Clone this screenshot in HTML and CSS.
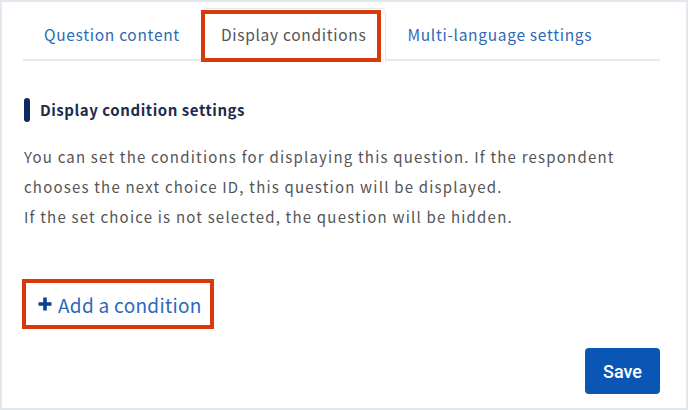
FILE: index.html
```html
<!DOCTYPE html>
<html lang="en">
<head>
    <meta charset="UTF-8">
    <meta name="viewport" content="width=device-width, initial-scale=1.0">
    <title>Display conditions</title>
    <link rel="stylesheet" href="styles.css">
</head>
<body>
    <div class="panel">
        <ul class="tabs">
            <li class="tab">Question content</li>
            <li class="tab active">Display conditions</li>
            <li class="tab">Multi-language settings</li>
        </ul>

        <div class="content">
            <h2 class="section-title">Display condition settings</h2>
            <p class="description">
                You can set the conditions for displaying this question. If the respondent<br>
                chooses the next choice ID, this question will be displayed.<br>
                If the set choice is not selected, the question will be hidden.
            </p>

            <div class="add-wrap">
                <a class="add-link" href="#">
                    <svg class="plus" width="14" height="14" viewBox="0 0 14 14">
                        <path d="M7 0.5v13M0.5 7h13" stroke="#0b3f8f" stroke-width="3.6" fill="none"/>
                    </svg>
                    Add a condition
                </a>
            </div>
        </div>

        <div class="actions">
            <button class="save-btn">Save</button>
        </div>
    </div>
</body>
</html>
```

FILE: styles.css
```css
body {
    margin: 0;
    padding: 0;
    background: #ffffff;
    font-family: "Noto Sans CJK JP", "Noto Sans", sans-serif;
}
.panel {
    box-sizing: border-box;
    width: 688px;
    height: 410px;
    border: 2px solid #e3e7ee;
    display: flex;
    flex-direction: column;
}
.tabs {
    list-style: none;
    margin: 6px 26px 0 21px;
    padding: 0;
    display: flex;
    border-bottom: 2px solid #e6e9ee;
}
.tab {
    position: relative;
    height: 51px;
    box-sizing: border-box;
    padding: 0 21px 0 20px;
    display: flex;
    align-items: center;
    font-size: 15.5px;
    letter-spacing: 0.7px;
    color: #2e6ab3;
    border: 1px solid transparent;
    border-bottom: none;
    margin-bottom: -2px;
}
.tab.active {
    color: #555555;
    background: #ffffff;
    border-color: #e3e7ee;
    border-radius: 5px 5px 0 0;
    padding: 0 19px 2px 18px;
    height: 53px;
}
/* red highlight around the active tab */
.tab.active::after {
    content: "";
    position: absolute;
    left: -2px;
    top: 1px;
    right: 4px;
    height: 52px;
    box-sizing: border-box;
    border: 4px solid #d83a0c;
}
.content {
    padding: 0 24px 0 22px;
    flex: 1;
}
.section-title {
    margin: 37px 0 0 0;
    padding-left: 16px;
    position: relative;
    font-size: 15px;
    letter-spacing: 0.55px;
    font-weight: bold;
    color: #1d2b4c;
    line-height: 24px;
}
.section-title::before {
    content: "";
    position: absolute;
    left: 0;
    top: 0;
    width: 6px;
    height: 24px;
    border-radius: 3px;
    background: #0d2a5c;
}
.description {
    margin: 20px 0 0 0;
    font-size: 15px;
    letter-spacing: 1.2px;
    line-height: 30px;
    color: #555555;
}
.add-wrap {
    margin-top: 47px;
}
.add-link {
    display: inline-flex;
    align-items: center;
    gap: 6px;
    box-sizing: border-box;
    height: 50px;
    margin-left: -2px;
    padding: 0 8px 0 12px;
    border: 4px solid #d83a0c;
    font-size: 19px;
    letter-spacing: 0.3px;
    color: #2d68b8;
    text-decoration: none;
}
.actions {
    display: flex;
    justify-content: flex-end;
    padding: 0 26px 14px 0;
}
.save-btn {
    width: 75px;
    height: 46px;
    border: none;
    border-radius: 4px;
    background: #0a56b4;
    color: #ffffff;
    font-family: Roboto, "Liberation Sans", sans-serif;
    font-size: 18px;
    font-weight: 500;
}
```
